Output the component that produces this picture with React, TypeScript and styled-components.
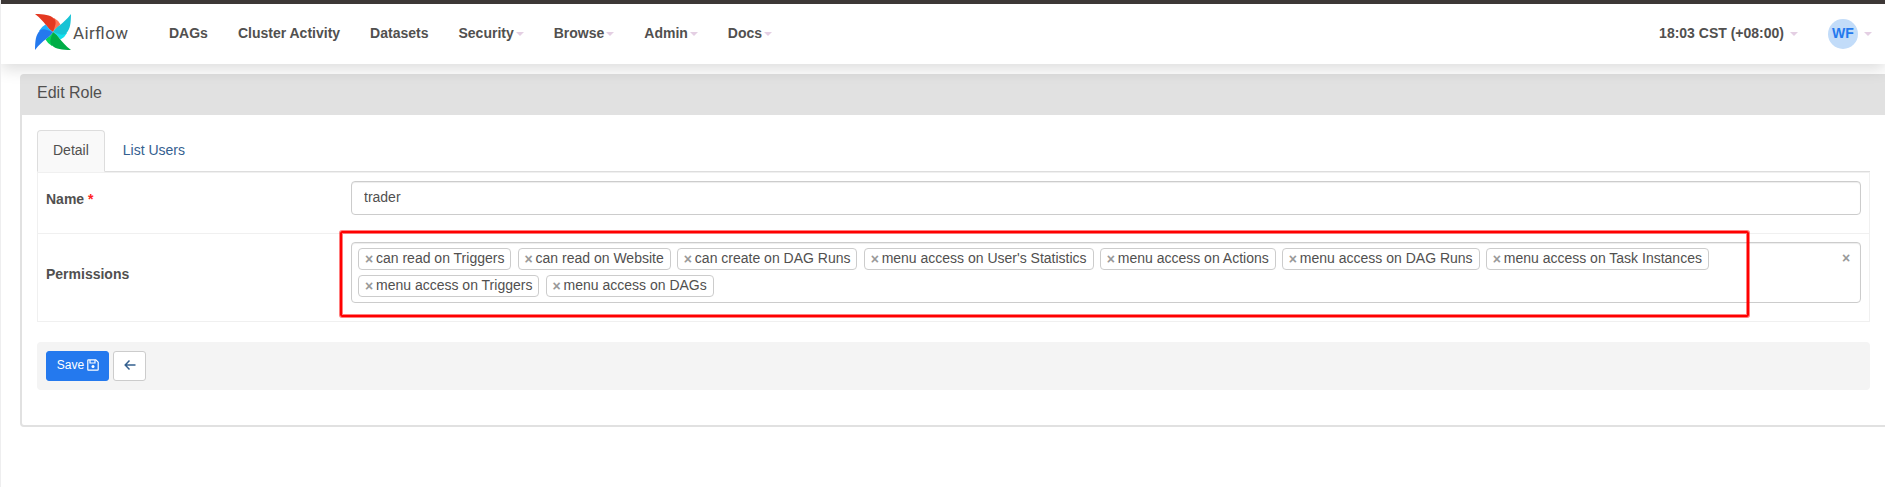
import React from 'react';
import styled, { createGlobalStyle } from 'styled-components';

const Global = createGlobalStyle`
  *, *::before, *::after { box-sizing: border-box; }
  body {
    margin: 0;
    background: #fff;
    color: #51504f;
    font: 14px/20px "Liberation Sans", Arial, sans-serif;
    overflow: hidden;
  }
`;

const Page = styled.div`
  height: 487px;
  border-left: 1px solid #eeeeef;
  overflow: hidden;
`;

const Navbar = styled.nav`
  position: relative;
  display: flex;
  align-items: center;
  height: 64px;
  border-top: 4px solid #3d3836;
  background: #fff;
  box-shadow: 0 5px 15px rgba(0, 0, 0, 0.14);
  font-weight: bold;
`;

const Brand = styled.a`
  display: flex;
  align-items: center;
  width: 94px;
  margin: -4px 25px 0 34px;
`;

const NavItem = styled.a<{ $gap?: number }>`
  display: flex;
  align-items: center;
  padding: 0 15px;
  margin-top: -2px;
  white-space: nowrap;
  gap: ${(p) => p.$gap ?? 2}px;
`;

const NavEnd = styled.div`
  display: flex;
  align-items: center;
  margin: 0 -2px 0 auto;
`;

const Caret = styled.span`
  margin-top: 2px;
  border: 4px solid transparent;
  border-top-color: #e4cfe3;
  border-bottom: 0;
`;

const Avatar = styled.span`
  width: 30px;
  height: 30px;
  margin-top: 2px;
  border-radius: 50%;
  background: #c2dcf9;
  color: #2479ee;
  line-height: 28px;
  text-align: center;
`;

const Panel = styled.section`
  width: 1890px;
  height: 353px;
  margin: 10px 0 0 19px;
  border: 2px solid #e1e1e1;
  border-radius: 4px;
`;

const PanelHead = styled.header`
  height: 39px;
  padding: 7px 15px;
  background: #e1e1e1;
  font-size: 16px;
`;

const PanelBody = styled.div`
  width: 1863px;
  padding: 15px;
`;

const Tabs = styled.div`
  display: flex;
  height: 42px;
  border-bottom: 1px solid #ddd;
`;

const Tab = styled.a<{ $active?: boolean }>`
  height: 42px;
  margin-right: 2px;
  padding: 9px 15px;
  border: 1px solid ${(p) => (p.$active ? '#ddd' : 'transparent')};
  border-bottom-color: ${(p) => (p.$active ? '#f9f9f9' : 'transparent')};
  border-radius: 4px 4px 0 0;
  background: ${(p) => (p.$active ? '#f9f9f9' : 'transparent')};
  background-clip: padding-box;
  color: ${(p) => (p.$active ? '#51504f' : '#34608f')};
`;

const Fields = styled.div`
  border: 1px solid #f0f0f0;
`;

const Field = styled.div<{ $height: number }>`
  display: grid;
  grid-template-columns: 305px 1fr;
  height: ${(p) => p.$height}px;
  padding: 8px;
  & + & { border-top: 1px solid #f0f0f0; }
`;

const Label = styled.label<{ $top: number }>`
  padding-top: ${(p) => p.$top}px;
  font-weight: bold;
`;

const Required = styled.span`
  color: #f22;
`;

const TextInput = styled.input`
  width: 100%;
  height: 34px;
  padding: 4px 12px 7px;
  border: 1px solid #ccc;
  border-radius: 4px;
  box-shadow: inset 0 1px 1px rgba(0, 0, 0, 0.075);
  color: inherit;
  font: inherit;
`;

const MultiSelect = styled.div`
  position: relative;
  display: flex;
  justify-content: space-between;
  height: 61px;
  padding: 5px 7px 0 6px;
  border: 1px solid #ccc;
  border-radius: 4px;
  box-shadow: inset 0 1px 1px rgba(0, 0, 0, 0.075);
`;

const Chips = styled.div`
  display: flex;
  flex-wrap: wrap;
  align-content: flex-start;
  gap: 5px 6.15px;
  width: 1430px;
`;

const Chip = styled.span`
  display: flex;
  height: 22px;
  padding: 0 6px;
  border: 1px solid #ccc;
  border-radius: 4px;
  line-height: 19px;
  white-space: nowrap;
`;

const Cross = styled.span`
  width: 11px;
  color: #999;
  font-weight: bold;
  line-height: 21px;
`;

const Highlight = styled.div`
  position: absolute;
  top: -12px;
  left: -12px;
  width: 1409px;
  height: 86px;
  border: 2px solid #f00;
  border-radius: 2px;
  box-shadow: 0 0 0 1px rgba(255, 0, 0, 0.5), inset 0 0 0 1px rgba(255, 0, 0, 0.5);
`;

const Actions = styled.div`
  display: flex;
  gap: 4px;
  height: 48px;
  margin-top: 20px;
  padding: 9px;
  border-radius: 4px;
  background: #f4f4f4;
`;

const Button = styled.button<{ $primary?: boolean }>`
  display: flex;
  align-items: center;
  justify-content: center;
  gap: 3px;
  width: ${(p) => (p.$primary ? 63 : 33)}px;
  height: 30px;
  padding: ${(p) => (p.$primary ? '0 0 2px 1px' : '0 0 3px 0')};
  border: 1px solid ${(p) => (p.$primary ? '#2479ee' : '#ccc')};
  border-radius: 3px;
  background: ${(p) => (p.$primary ? '#2479ee' : '#fff')};
  color: ${(p) => (p.$primary ? '#fff' : '#34608f')};
  font: 12px/18px "Liberation Sans", Arial, sans-serif;
`;

const blades = [
  { angle: 0, main: '#e43921', light: '#ff7557' },
  { angle: 90, main: '#17c3d5', light: '#11e1ee' },
  { angle: 180, main: '#00ad46', light: '#04d659' },
  { angle: 270, main: '#2479ee', light: '#21b0ff' },
];

const Logo = () => (
  <svg width="94" height="36" viewBox="0 0 94 36">
    {blades.map((b) => (
      <g key={b.angle} transform={`rotate(${b.angle} 18 18)`}>
        <path d="M18 18C20 14.5 23 13 25.5 10.5Q23 6 19 4Q19 8 18 18Z" fill={b.light} />
        <path d="M0 0C9 .2 15 .5 19.5 5Q21.5 8 20 12Q19.5 14 18 18C12 14.5 11 8.5 0 0Z" fill={b.main} />
      </g>
    ))}
    <text x="38" y="24.5" fontFamily="Roboto, sans-serif" fontSize="17" fontWeight="400" fill="#51504f" textLength="55">Airflow</text>
  </svg>
);

const SaveIcon = () => (
  <svg width="12" height="12" viewBox="0 0 12 12" fill="none" stroke="currentColor" strokeWidth="1.2">
    <path d="M1.5.8h7.3l2.4 2.4v7.3q0 .7-.7.7h-9q-.7 0-.7-.7v-9q0-.7.7-.7Z" />
    <path d="M3 1v3h5V1" />
    <circle cx="6" cy="7.6" r="1.5" fill="currentColor" stroke="none" />
  </svg>
);

const BackIcon = () => (
  <svg width="12" height="12" viewBox="0 0 12 12" fill="none" stroke="currentColor" strokeWidth="1.5">
    <path d="M11.5 6H1.3M5.5 1.6 1.2 6l4.3 4.4" />
  </svg>
);

const links = [
  { name: 'DAGs' },
  { name: 'Cluster Activity' },
  { name: 'Datasets' },
  { name: 'Security', menu: true },
  { name: 'Browse', menu: true },
  { name: 'Admin', menu: true },
  { name: 'Docs', menu: true },
];

const permissions = [
  'can read on Triggers',
  'can read on Website',
  'can create on DAG Runs',
  "menu access on User's Statistics",
  'menu access on Actions',
  'menu access on DAG Runs',
  'menu access on Task Instances',
  'menu access on Triggers',
  'menu access on DAGs',
];

export default function App() {
  return (
    <Page>
      <Global />
      <Navbar>
        <Brand><Logo /></Brand>
        {links.map((l) => (
          <NavItem key={l.name}>{l.name}{l.menu && <Caret />}</NavItem>
        ))}
        <NavEnd>
          <NavItem $gap={6}>18:03 CST (+08:00)<Caret /></NavItem>
          <NavItem $gap={6}><Avatar>WF</Avatar><Caret /></NavItem>
        </NavEnd>
      </Navbar>
      <Panel>
        <PanelHead>Edit Role</PanelHead>
        <PanelBody>
          <Tabs>
            <Tab $active>Detail</Tab>
            <Tab>List Users</Tab>
          </Tabs>
          <Fields>
            <Field $height={60}>
              <Label $top={8}>Name <Required>*</Required></Label>
              <TextInput defaultValue="trader" />
            </Field>
            <Field $height={88}>
              <Label $top={22}>Permissions</Label>
              <MultiSelect>
                <Chips>
                  {permissions.map((p) => (
                    <Chip key={p}><Cross>×</Cross>{p}</Chip>
                  ))}
                </Chips>
                <Cross>×</Cross>
                <Highlight />
              </MultiSelect>
            </Field>
          </Fields>
          <Actions>
            <Button $primary>Save<SaveIcon /></Button>
            <Button aria-label="Back"><BackIcon /></Button>
          </Actions>
        </PanelBody>
      </Panel>
    </Page>
  );
}
